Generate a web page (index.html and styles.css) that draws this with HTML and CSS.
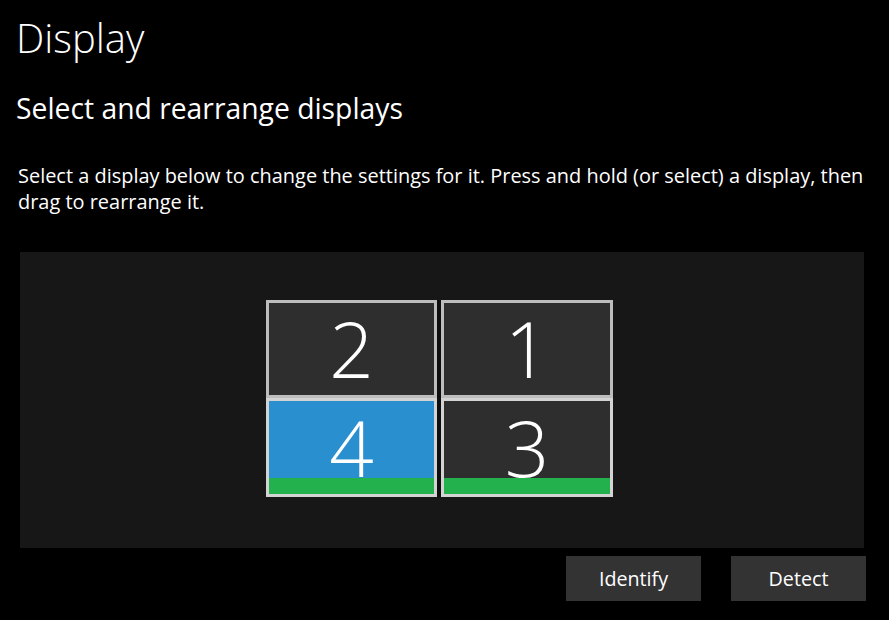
FILE: index.html
```html
<!DOCTYPE html>
<html lang="en">
<head>
<meta charset="utf-8">
<title>Display</title>
<link rel="stylesheet" href="styles.css">
</head>
<body>
<main class="page">
  <h1 class="title">Display</h1>
  <h2 class="subtitle">Select and rearrange displays</h2>
  <p class="desc">Select a display below to change the settings for it. Press and hold (or select) a display, then drag to rearrange it.</p>
  <section class="panel">
    <div class="grid">
      <div class="mon">2</div>
      <div class="mon">1</div>
      <div class="mon mon-sel">4<span class="bar"></span></div>
      <div class="mon mon-low">3<span class="bar"></span></div>
    </div>
  </section>
  <div class="actions">
    <button class="btn">Identify</button>
    <button class="btn">Detect</button>
  </div>
</main>
</body>
</html>
```

FILE: styles.css
```css
html, body {
  margin: 0;
  padding: 0;
  background: #000;
  color: #fff;
  font-family: "Open Sans", "Noto Sans", "DejaVu Sans", sans-serif;
}
.page {
  width: 889px;
  height: 620px;
  overflow: hidden;
  box-sizing: border-box;
  padding: 0 0 0 16px;
}
.title {
  margin: 12px 0 0 0;
  font-size: 40px;
  font-weight: 300;
  line-height: 52px;
}
.subtitle {
  margin: 26px 0 0 0;
  font-size: 28.3px;
  font-weight: 400;
  line-height: 36px;
}
.desc {
  margin: 37px 0 0 2px;
  width: 860px;
  font-size: 19.95px;
  line-height: 26px;
}
.panel {
  margin: 37px 0 0 4px;
  width: 844px;
  height: 296px;
  background: #171717;
  display: flex;
  align-items: center;
  justify-content: center;
  box-sizing: border-box;
  padding: 0 5px 3px 0;
}
.grid {
  display: grid;
  grid-template-columns: 171px 172px;
  grid-template-rows: 98px 99px;
  column-gap: 4px;
  background: #0e0e0e;
}
.mon {
  position: relative;
  box-sizing: border-box;
  border: 3px solid #bdbdbd;
  background: #2e2e2e;
  display: flex;
  align-items: center;
  justify-content: center;
  font-size: 78px;
  font-weight: 300;
  line-height: 1;
  padding-bottom: 2px;
}
.mon-low {
  border-color: #d3d3d3;
}
.mon-sel {
  border-color: #d3d3d3;
  background: #2a8fce;
}
.bar {
  position: absolute;
  left: 0;
  right: 0;
  bottom: 0;
  height: 16px;
  background: #22b14c;
}
.actions {
  display: flex;
  justify-content: flex-end;
  gap: 30px;
  margin-top: 8px;
  width: 850px;
}
.btn {
  width: 135px;
  height: 45px;
  border: 0;
  background: #333;
  color: #fff;
  font-family: "Open Sans", "Noto Sans", "DejaVu Sans", sans-serif;
  font-size: 19.7px;
  padding: 0;
}
```
